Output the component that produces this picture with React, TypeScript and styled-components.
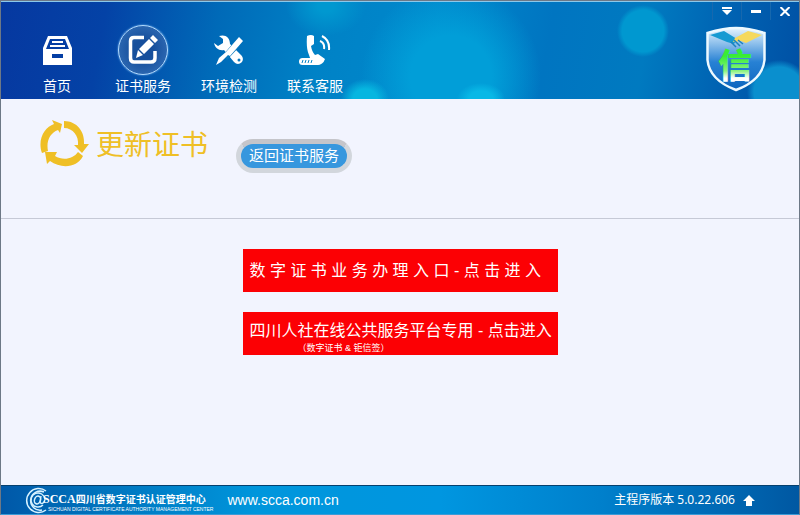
import React from "react";
import styled, { createGlobalStyle } from "styled-components";

const GlobalStyle = createGlobalStyle`
  * { box-sizing: border-box; }
  body {
    margin: 0;
    background: #f2f4fe;
    font-family: "Liberation Sans", "Noto Sans CJK SC", sans-serif;
  }
  svg { display: block; }
`;

const Window = styled.div`
  min-height: 100vh;
  display: flex;
  flex-direction: column;
  border: 1px solid #6d7886;
  border-bottom-color: #3b9bd6;
  background: #f2f4fe;
`;

const Header = styled.header`
  display: flex;
  justify-content: space-between;
  height: 98px;
  overflow: hidden;
  border-top: 1px solid #8cc8ea;
  background:
    radial-gradient(circle 26px at 642px 29px, #0098d0 80%, #0098d000 100%),
    radial-gradient(circle 32px at 778px 90px, #0a8fce 78%, #0a8fce00 100%),
    radial-gradient(ellipse 24px 16px at 480px 97px, #08b8e6 50%, #08b8e600 100%),
    radial-gradient(ellipse 24px 20px at 364px 97px, #06b6e0 50%, #06b6e000 100%),
    radial-gradient(ellipse 40px 30px at 325px 4px, #0098d0 20%, #0098d000 100%),
    radial-gradient(ellipse 90px 92px at 450px 75px, #019ed8 45%, #019ed800 100%),
    linear-gradient(100deg, #0638a0 0%, #0442a6 13%, #006ab8 27%, #0082c6 40%, #0088cc 54%, #0075c1 68%, #007ac0 80%, #0062b2 90%, #0050a4 100%);
  color: #fff;
`;

const Nav = styled.nav`
  display: flex;
  padding: 23px 0 0 13px;
`;

const NavItem = styled.button`
  width: 86px;
  display: flex;
  flex-direction: column;
  align-items: center;
  gap: 1px;
  padding: 0;
  border: 0;
  background: none;
  color: #fff;
  font: 14px/20px "Liberation Sans", "Noto Sans CJK SC", sans-serif;
`;

const NavIcon = styled.span<{ $active?: boolean }>`
  width: 50px;
  height: 50px;
  display: grid;
  place-items: center;
  border-radius: 50%;
  border: 1px solid ${(p) => (p.$active ? "#b4dcff" : "transparent")};
  background: ${(p) => (p.$active ? "radial-gradient(circle, #164f9c 30%, #3976be 100%)" : "none")};
  box-shadow: ${(p) => (p.$active ? "0 0 2px #8ac6fa" : "none")};
`;

const HeaderRight = styled.div`
  display: flex;
  flex-direction: column;
  align-items: flex-end;
  gap: 6px;
`;

const Controls = styled.div`
  display: flex;
`;

const ControlButton = styled.button`
  width: 29px;
  height: 18px;
  display: grid;
  place-items: center;
  padding: 0;
  border: 0;
  border-left: 1px solid #1768ae;
  background: none;
`;

const Brand = styled.div`
  padding-right: 33px;
`;

const TitleBar = styled.section`
  display: flex;
  height: 120px;
  padding: 20px 40px 0 38px;
  border-bottom: 1px solid #c6c9d6;
`;

const Title = styled.h1`
  margin: 6px 28px 0 5px;
  color: #efbf26;
  font-size: 28px;
  line-height: 42px;
  font-weight: 400;
`;

const BackButton = styled.button`
  align-self: flex-start;
  height: 34px;
  margin-top: 20px;
  padding: 0 8px;
  border: 5px solid #d2d6dc;
  border-top-color: #c5c5ca;
  border-radius: 17px;
  background: #3797de;
  color: #fff;
  font: 15px/24px "Liberation Sans", "Noto Sans CJK SC", sans-serif;
`;

const Main = styled.main`
  flex: 1;
  display: flex;
  flex-direction: column;
  align-items: center;
  gap: 20px;
  padding: 30px 0;
`;

const EntryLink = styled.a`
  width: 315px;
  height: 43px;
  display: flex;
  flex-direction: column;
  justify-content: center;
  padding: 0 4px 0 7px;
  background: #fc0004;
  color: #fff;
  font-size: 16px;
  line-height: 20px;
  text-decoration: none;
  white-space: nowrap;

  &:has(small) {
    justify-content: flex-end;
  }
`;

const EntryNote = styled.small`
  padding-left: 48px;
  font-size: 9px;
  line-height: 14px;
`;

const Footer = styled.footer`
  display: flex;
  align-items: center;
  height: 29px;
  padding: 0 44px 0 22px;
  border-top: 1px solid #06406e;
  background: linear-gradient(90deg, #0058a8 0%, #0072bc 12%, #0096dc 32%, #0096e0 55%, #0080cc 75%, #006cb8 88%, #0058a2 100%);
  color: #fff;
`;

const FooterBrand = styled.div`
  display: flex;
  align-items: center;
`;

const BrandText = styled.div`
  display: flex;
  flex-direction: column;
  margin-left: -8px;
  padding-top: 3px;
`;

const BrandName = styled.div`
  display: flex;
  align-items: center;
  height: 14px;
  font-size: 10px;
  font-weight: 700;
  white-space: nowrap;
`;

const BrandInitials = styled.span`
  font: 700 12px/14px "Liberation Serif", serif;
`;

const BrandSub = styled.div`
  padding-left: 5px;
  font-size: 5px;
  line-height: 6px;
  white-space: nowrap;
`;

const SiteLink = styled.a`
  margin-left: 14px;
  color: #fff;
  font-size: 14px;
  line-height: 20px;
  text-decoration: none;
`;

const Version = styled.div`
  display: flex;
  align-items: center;
  gap: 8px;
  margin-left: auto;
  font: 12px/20px "Noto Sans", "Noto Sans CJK SC", sans-serif;
`;

const HomeIcon = () => (
  <svg width="29" height="29" viewBox="0 0 29 29">
    <path fill="#fff" fillRule="evenodd" d="M5 0H24L29 12V29H0V12ZM7 3L3 13H26L22 3ZM9 18V22H20V18Z" />
    <path stroke="#fff" strokeWidth="2" d="M9 6H20M7 10H22" />
  </svg>
);

const EditIcon = () => (
  <svg width="32" height="32" viewBox="0 0 32 32" fill="none">
    <path stroke="#fff" strokeWidth="3.500" d="M17 3.500H7Q3.500 3.500 3.500 7V24Q3.500 28 7 28H24Q28 28 28 24V17" />
    <path fill="#fff" d="M9 24L11 16L16 21ZM12 15L22 5L27 10L17 20ZM23 4L26 1L31 6L28 9Z" />
  </svg>
);

const ToolsIcon = () => (
  <svg width="30" height="30" viewBox="0 0 30 30">
    <path fill="#fff" d="M5 1C11-1 16 2 16 9L27 20C31 24 28 29 24 29Q22 29 20 27L10 15C5 16 1 13 0 8L4 11L9 8V4Z" />
    <circle cx="25" cy="25" r="1.500" fill="#0878bd" />
    <path fill="#0878bd" d="M9 20L21 6L26 11L13 25Z" />
    <path fill="#fff" d="M12 17L25 2L29 6L16 21L14 20L7 27L2 30L5 23Z" />
  </svg>
);

const PhoneIcon = () => (
  <svg width="32" height="30" viewBox="0 0 32 30" fill="none">
    <path fill="#fff" d="M8 1Q12-1 15 1L15 9L12 11Q13 17 16 20L19 19L26 24Q24 30 18 30Q12 28 10 20Q7 14 8 1Z" />
    <rect y="23" width="21" height="7" rx="3.500" fill="#fff" />
    <path stroke="#0684c5" strokeWidth="1" d="M4 25L3 28M7 25L6 28M10 25L9 28M13 25L12 28" />
    <path stroke="#fff" strokeWidth="2" d="M21 6Q26 8 25 14M23 1Q31 5 30 15" />
  </svg>
);

const ShieldLogo = () => (
  <svg width="60" height="66" viewBox="0 0 60 66" role="img" aria-label="信">
    <defs>
      <linearGradient id="shield" x1="0" y1="0" x2="0" y2="1">
        <stop offset="0" stopColor="#e4f4ff" />
        <stop offset=".55" stopColor="#2781d4" />
        <stop offset="1" stopColor="#0c65be" />
      </linearGradient>
      <linearGradient id="glyph" x1="0" y1="0" x2="0" y2="1">
        <stop offset=".35" stopColor="#38ed35" />
        <stop offset=".65" stopColor="#8af37e" />
        <stop offset=".8" stopColor="#fff" />
      </linearGradient>
    </defs>
    <path fill="url(#shield)" stroke="#edf9ff" strokeWidth="2.500" d="M1.500 7Q18 2 30 2Q43 2 58.500 7V34C57 49 46 58 30 64C14 58 3 49 1.500 34Z" />
    <path fill="#169ad2" d="M4 9L18 5L31 13L28 18L21 16Z" />
    <path fill="#f5d95e" d="M56 9L42 5L29 12L27 16L35 15L40 17Z" />
    <path stroke="#1c81bf" strokeWidth="1.500" fill="none" d="M25 16L30 21M28 14L34 20M32 14L37 18" />
    <text x="12" y="52" fontFamily="Noto Sans CJK SC, sans-serif" fontWeight="900" fontSize="34" fill="url(#glyph)">信</text>
  </svg>
);

const RenewIcon = () => (
  <svg width="52" height="50" viewBox="0 0 52 50" fill="#efbf26">
    <path d="M3 34C-2 20 6 8 15 5L13 1L23 5L21 14L19 11C11 14 7 22 9 32Z" />
    <path d="M25 2C38 2 46 13 45 25L50 25L43 34L35 26H39C40 17 34 9 25 9Z" />
    <path d="M44 37C38 49 22 50 11 42L8 45L6 33L18 33L16 37C24 42 34 40 39 33Z" />
  </svg>
);

const AtLogo = () => (
  <svg width="28" height="28" viewBox="0 0 28 28" fill="none" stroke="#d7f2ff">
    <path strokeWidth="1.500" d="M23 5A12 12 0 1 0 23 24M21 6A9.500 9.500 0 1 0 19 24" />
    <path strokeWidth="1.400" d="M20 19A7 7 0 1 1 22 13C22 17 18 19 17 16L18 10" />
    <ellipse cx="14.500" cy="14" rx="3" ry="4" strokeWidth="1.500" transform="rotate(20 14.500 14)" />
  </svg>
);

const navItems = [
  { label: "首页", icon: <HomeIcon /> },
  { label: "证书服务", icon: <EditIcon />, active: true },
  { label: "环境检测", icon: <ToolsIcon /> },
  { label: "联系客服", icon: <PhoneIcon /> },
];

export default function App() {
  return (
    <>
      <GlobalStyle />
      <Window lang="zh-CN">
        <Header>
          <Nav>
            {navItems.map((item) => (
              <NavItem key={item.label} type="button">
                <NavIcon $active={item.active}>{item.icon}</NavIcon>
                {item.label}
              </NavItem>
            ))}
          </Nav>
          <HeaderRight>
            <Controls>
              <ControlButton type="button" aria-label="菜单">
                <svg width="10" height="8" viewBox="0 0 10 8" fill="#fff"><path d="M0 0H10V2H0ZM0 3H10L5 8Z" /></svg>
              </ControlButton>
              <ControlButton type="button" aria-label="最小化">
                <svg width="10" height="3" viewBox="0 0 10 3"><path fill="#fff" d="M0 0H10V3H0Z" /></svg>
              </ControlButton>
              <ControlButton type="button" aria-label="关闭">
                <svg width="10" height="9" viewBox="0 0 10 9"><path stroke="#fff" strokeWidth="2" d="M.5 0L9.500 9M9.500 0L.5 9" /></svg>
              </ControlButton>
            </Controls>
            <Brand><ShieldLogo /></Brand>
          </HeaderRight>
        </Header>
        <TitleBar>
          <RenewIcon />
          <Title>更新证书</Title>
          <BackButton type="button">返回证书服务</BackButton>
        </TitleBar>
        <Main>
          <EntryLink href="#certificate">数 字 证 书 业 务 办 理 入 口 - 点 击 进 入</EntryLink>
          <EntryLink href="#social">
            四川人社在线公共服务平台专用 - 点击进入
            <EntryNote>（数字证书 &amp; 钜信签）</EntryNote>
          </EntryLink>
        </Main>
        <Footer>
          <FooterBrand>
            <AtLogo />
            <BrandText>
              <BrandName><BrandInitials>SCCA</BrandInitials>四川省数字证书认证管理中心</BrandName>
              <BrandSub>SICHUAN DIGITAL CERTIFICATE AUTHORITY MANAGEMENT CENTER</BrandSub>
            </BrandText>
          </FooterBrand>
          <SiteLink href="http://www.scca.com.cn">www.scca.com.cn</SiteLink>
          <Version>
            主程序版本 5.0.22.606
            <svg width="12" height="11" viewBox="0 0 12 11" fill="#fff"><path d="M6 0L12 6H9V11H3V6H0Z" /></svg>
          </Version>
        </Footer>
      </Window>
    </>
  );
}
